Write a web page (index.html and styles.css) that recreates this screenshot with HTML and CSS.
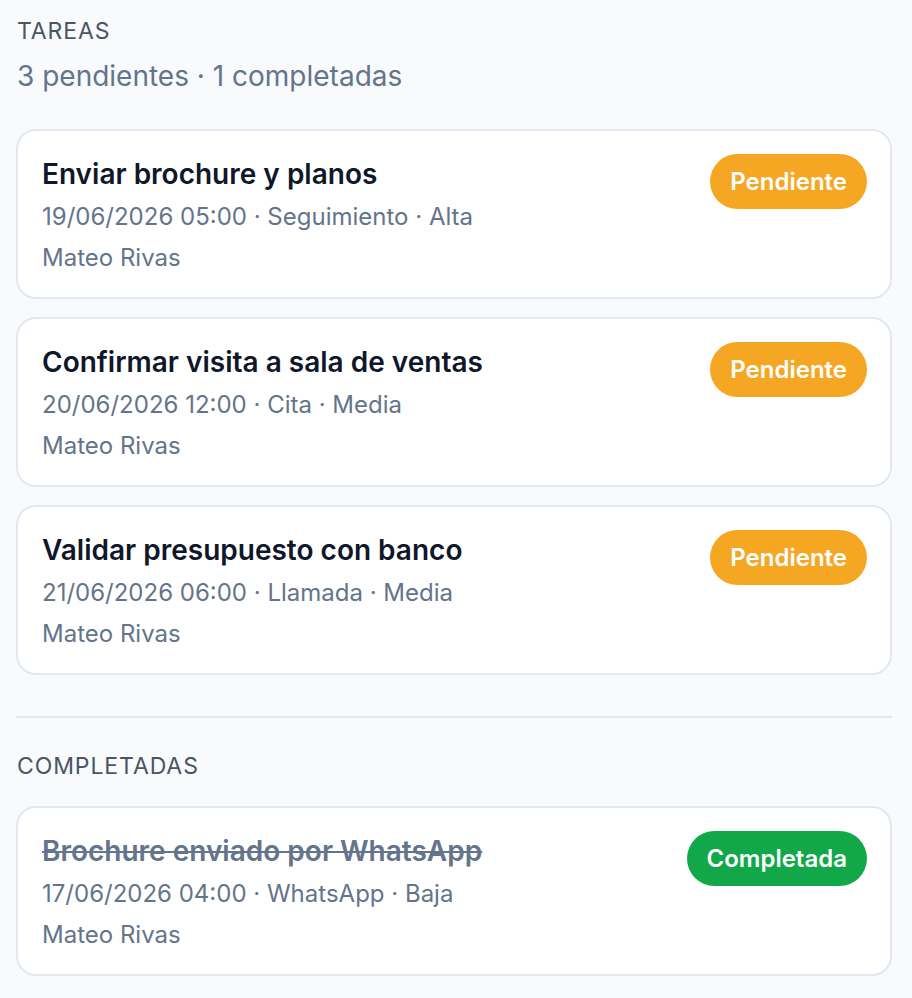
FILE: index.html
```html
<!DOCTYPE html>
<html lang="es">
<head>
<meta charset="utf-8">
<title>Tareas</title>
<link rel="stylesheet" href="styles.css">
</head>
<body>
<main class="page">
  <header class="head">
    <div class="label">TAREAS</div>
    <div class="summary">3 pendientes · 1 completadas</div>
  </header>
  <section class="list">
    <article class="card">
      <div class="info">
        <div class="title">Enviar brochure y planos</div>
        <div class="meta first">19/06/2026 05:00 · Seguimiento · Alta</div>
        <div class="meta">Mateo Rivas</div>
      </div>
      <span class="badge pending">Pendiente</span>
    </article>
    <article class="card">
      <div class="info">
        <div class="title">Confirmar visita a sala de ventas</div>
        <div class="meta first">20/06/2026 12:00 · Cita · Media</div>
        <div class="meta">Mateo Rivas</div>
      </div>
      <span class="badge pending">Pendiente</span>
    </article>
    <article class="card">
      <div class="info">
        <div class="title">Validar presupuesto con banco</div>
        <div class="meta first">21/06/2026 06:00 · Llamada · Media</div>
        <div class="meta">Mateo Rivas</div>
      </div>
      <span class="badge pending">Pendiente</span>
    </article>
  </section>
  <hr class="divider">
  <div class="label section-label">COMPLETADAS</div>
  <section class="list list-done">
    <article class="card">
      <div class="info">
        <div class="title done">Brochure enviado por WhatsApp</div>
        <div class="meta first">17/06/2026 04:00 · WhatsApp · Baja</div>
        <div class="meta">Mateo Rivas</div>
      </div>
      <span class="badge complete">Completada</span>
    </article>
  </section>
</main>
</body>
</html>
```
FILE: styles.css
```css
* { box-sizing: border-box; }
html, body { margin: 0; padding: 0; }
body {
  background: #f8fafc;
  font-family: Inter, "Noto Sans", sans-serif;
  color: #0f172a;
}
.page {
  padding: 16px 20px 0 16px;
}
.label {
  font-size: 23px;
  line-height: 30px;
  color: #4b5563;
  letter-spacing: 0.9px;
  padding-left: 1px;
}
.summary {
  font-size: 28px;
  line-height: 36px;
  color: #64748b;
  margin-top: 12px;
  padding-left: 1px;
}
.list {
  display: flex;
  flex-direction: column;
  gap: 18px;
  margin-top: 35px;
}
.list-done {
  margin-top: 25px;
}
.card {
  background: #ffffff;
  border: 2px solid #e2e8f0;
  border-radius: 20px;
  padding: 23px 23px 19px 24px;
  display: flex;
  justify-content: space-between;
  align-items: flex-start;
  gap: 16px;
}
.info {
  display: flex;
  flex-direction: column;
}
.title {
  font-size: 28px;
  font-weight: 600;
  line-height: 40px;
  color: #0f172a;
}
.title.done {
  color: #64748b;
  text-decoration: line-through;
}
.meta {
  font-size: 24px;
  line-height: 41px;
  color: #64748b;
}
.meta.first {
  margin-top: 2px;
}
.badge {
  flex: none;
  font-size: 24px;
  font-weight: 600;
  line-height: 31px;
  padding: 12px 20px;
  border-radius: 999px;
  color: #ffffff;
}
.pending { background: #f5a623; }
.complete { background: #12a84a; }
.divider {
  border: 0;
  border-top: 2px solid #e2e8f0;
  margin: 41px 0 0 0;
}
.section-label {
  margin-top: 33px;
}
```
